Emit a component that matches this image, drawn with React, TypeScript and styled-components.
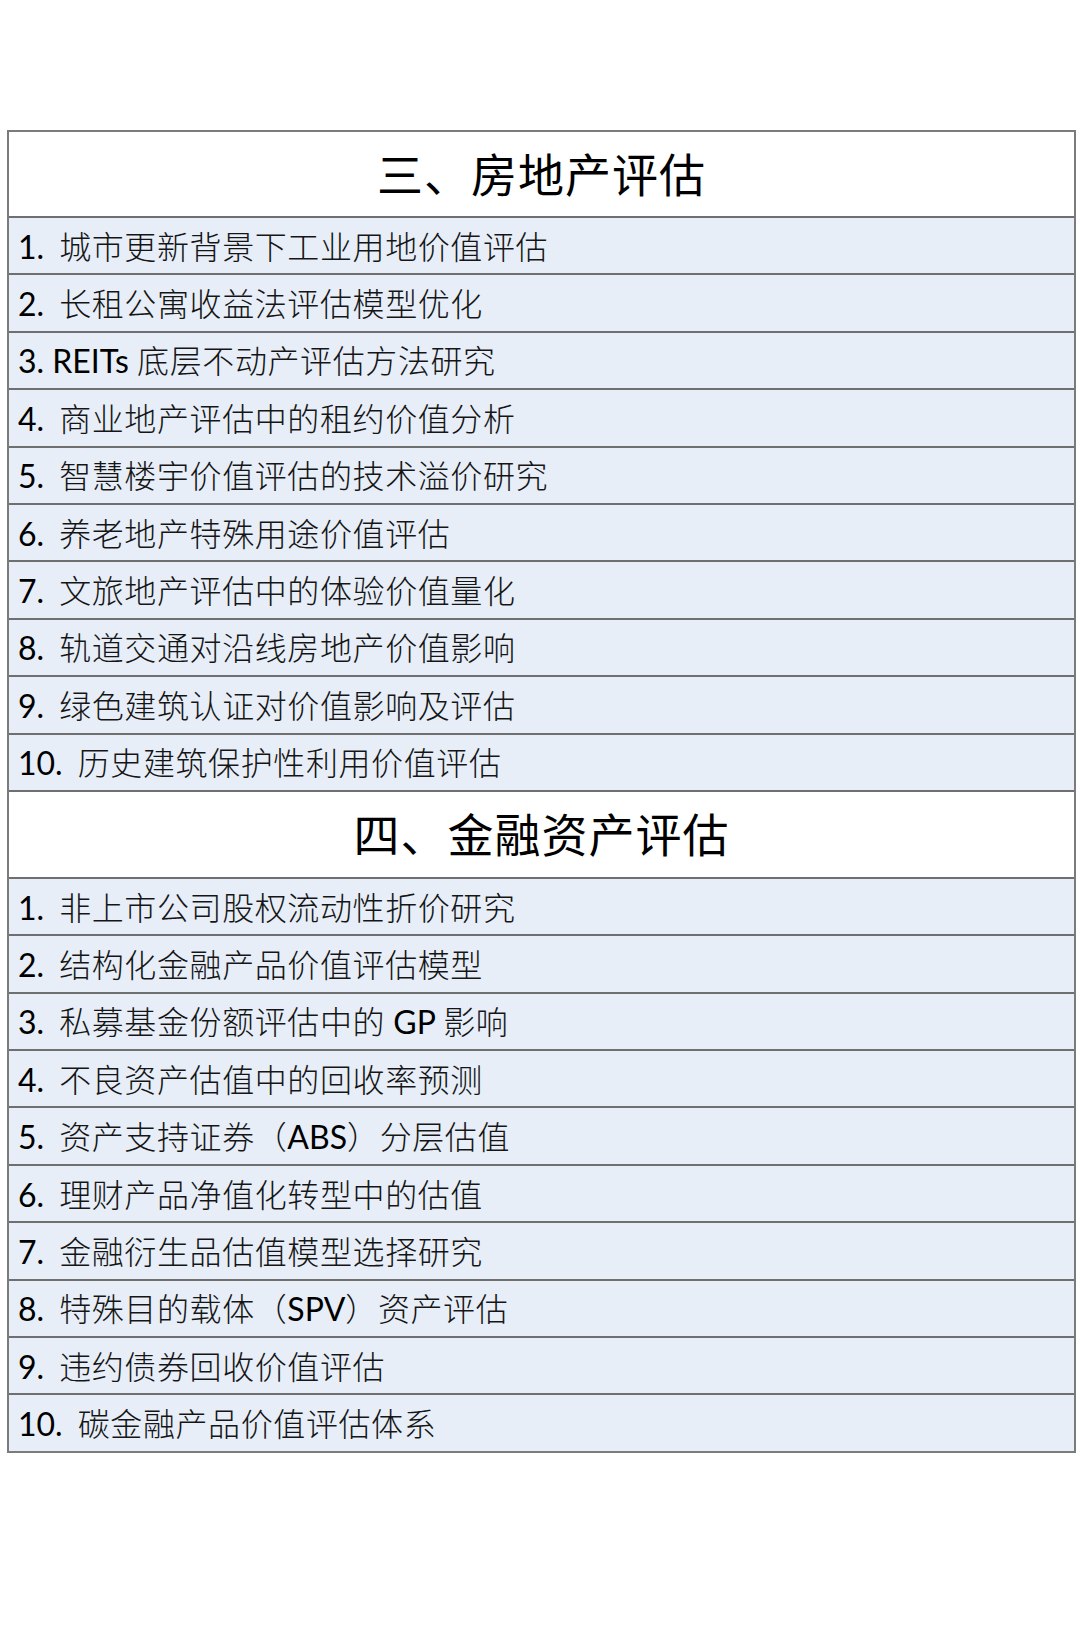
import React from "react";
import styled, { createGlobalStyle } from "styled-components";

const Global = createGlobalStyle`
  html, body { margin: 0; padding: 0; background: #ffffff; }
  body { font-family: Lato, "Noto Sans CJK SC", sans-serif; color: #111; }
`;

const Page = styled.div`
  width: 1080px;
  height: 1646px;
  box-sizing: border-box;
  padding: 130px 4px 0 7px;
  background: #fff;
`;

const Table = styled.div`
  display: flex;
  flex-direction: column;
  border: 2px solid #7b7b7b;
`;

const Header = styled.div<{ $first?: boolean }>`
  height: ${(p) => (p.$first ? 84 : 87)}px;
  border-top: ${(p) => (p.$first ? "none" : "2px solid #6f6f6f")};
  background: #ffffff;
  display: flex;
  align-items: center;
  justify-content: center;
  padding-bottom: 4px;
  box-sizing: border-box;
  font-family: "Noto Sans CJK SC", sans-serif;
  font-size: 46px;
  font-weight: 400;
  color: #000;
  letter-spacing: 1px;
`;

const Row = styled.div`
  height: 55.4px;
  border-top: 2px solid #6f6f6f;
  background: #e7eef8;
  display: flex;
  align-items: center;
  padding-left: 9px;
  font-size: 32px;
  white-space: pre;
`;

const Line = styled.span`
  display: block;
  line-height: 40px;
`;

const Num = styled.span`
  font-family: Lato, sans-serif;
  font-weight: 400;
  color: #000;
  margin-right: 15px;
`;

const Text = styled.span`
  font-family: "Noto Sans CJK SC", sans-serif;
  font-weight: 300;
  letter-spacing: 0.6px;
  color: #151515;
`;

const Latin = styled.span`
  font-family: Lato, sans-serif;
  font-weight: 400;
  letter-spacing: 0;
  color: #000;
`;

type Item = { n?: string; t: string };

const sections: { title: string; items: Item[] }[] = [
  {
    title: "三、房地产评估",
    items: [
      { n: "1.", t: "城市更新背景下工业用地价值评估" },
      { n: "2.", t: "长租公寓收益法评估模型优化" },
      { t: "3. REITs 底层不动产评估方法研究" },
      { n: "4.", t: "商业地产评估中的租约价值分析" },
      { n: "5.", t: "智慧楼宇价值评估的技术溢价研究" },
      { n: "6.", t: "养老地产特殊用途价值评估" },
      { n: "7.", t: "文旅地产评估中的体验价值量化" },
      { n: "8.", t: "轨道交通对沿线房地产价值影响" },
      { n: "9.", t: "绿色建筑认证对价值影响及评估" },
      { n: "10.", t: "历史建筑保护性利用价值评估" },
    ],
  },
  {
    title: "四、金融资产评估",
    items: [
      { n: "1.", t: "非上市公司股权流动性折价研究" },
      { n: "2.", t: "结构化金融产品价值评估模型" },
      { n: "3.", t: "私募基金份额评估中的 GP 影响" },
      { n: "4.", t: "不良资产估值中的回收率预测" },
      { n: "5.", t: "资产支持证券（ABS）分层估值" },
      { n: "6.", t: "理财产品净值化转型中的估值" },
      { n: "7.", t: "金融衍生品估值模型选择研究" },
      { n: "8.", t: "特殊目的载体（SPV）资产评估" },
      { n: "9.", t: "违约债券回收价值评估" },
      { n: "10.", t: "碳金融产品价值评估体系" },
    ],
  },
];

function renderText(t: string) {
  const parts = t.split(/([A-Za-z0-9. ]+)/).filter((p) => p.length > 0);
  return parts.map((p, i) =>
    /^[A-Za-z0-9. ]+$/.test(p) ? <Latin key={i}>{p}</Latin> : <React.Fragment key={i}>{p}</React.Fragment>
  );
}

export default function App() {
  return (
    <>
      <Global />
      <Page>
        <Table>
          {sections.map((s, si) => (
            <React.Fragment key={s.title}>
              <Header $first={si === 0}>{s.title}</Header>
              {s.items.map((it, i) => (
                <Row key={i}>
                  <Line>
                    {it.n && <Num>{it.n}</Num>}
                    <Text>{renderText(it.t)}</Text>
                  </Line>
                </Row>
              ))}
            </React.Fragment>
          ))}
        </Table>
      </Page>
    </>
  );
}
